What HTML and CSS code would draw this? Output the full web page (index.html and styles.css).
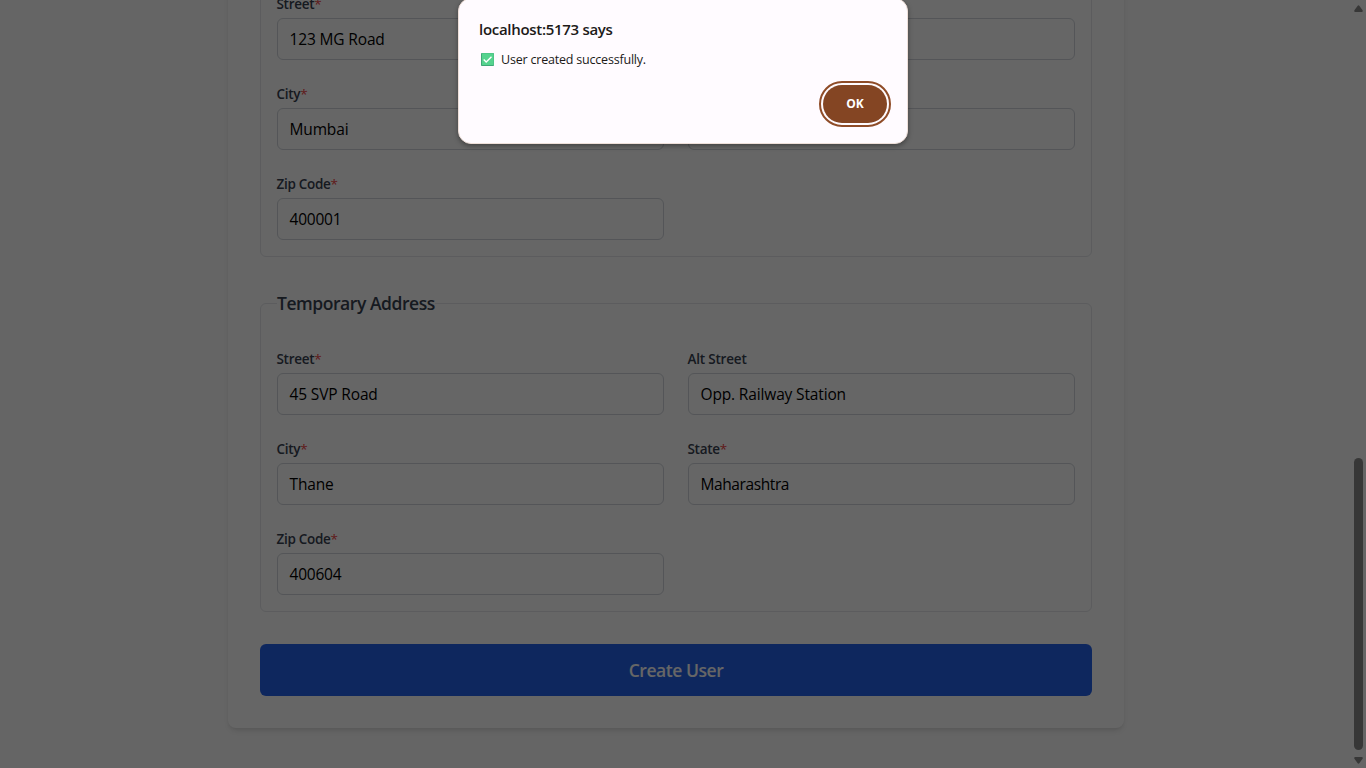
FILE: index.html
```html
<!DOCTYPE html>
<html lang="en">
<head>
<meta charset="utf-8">
<title>Create User</title>
<link rel="stylesheet" href="styles.css">
</head>
<body>
<div class="window">
  <main class="page">
    <form class="card">
      <fieldset class="group">
        <div class="fields">
          <div class="field"><label class="label">Street<span class="req">*</span></label><div class="input">123 MG Road</div></div>
          <div class="field"><label class="label"></label><div class="input"></div></div>
          <div class="field"><label class="label">City<span class="req">*</span></label><div class="input">Mumbai</div></div>
          <div class="field"><label class="label"></label><div class="input"></div></div>
          <div class="field"><label class="label">Zip Code<span class="req">*</span></label><div class="input digits">400001</div></div>
        </div>
      </fieldset>
      <fieldset class="group">
        <legend class="legend">Temporary Address</legend>
        <div class="fields">
          <div class="field"><label class="label">Street<span class="req">*</span></label><div class="input">45 SVP Road</div></div>
          <div class="field"><label class="label alt">Alt Street</label><div class="input">Opp. Railway Station</div></div>
          <div class="field"><label class="label">City<span class="req">*</span></label><div class="input">Thane</div></div>
          <div class="field"><label class="label">State<span class="req">*</span></label><div class="input tight">Maharashtra</div></div>
          <div class="field"><label class="label">Zip Code<span class="req">*</span></label><div class="input digits">400604</div></div>
        </div>
      </fieldset>
      <button class="submit" type="button">Create User</button>
    </form>
  </main>
  <div class="scrollbar">
    <svg class="arrow" width="9" height="7" viewBox="0 0 9 7"><path d="M4.5 0.2 Q5 0.2 5.5 1 L8.6 5.2 Q9.2 7 7.8 7 H1.2 Q-0.2 7 0.4 5.2 L3.5 1 Q4 0.2 4.5 0.2Z"/></svg>
    <div class="thumb"></div>
    <svg class="arrow" width="9" height="7" viewBox="0 0 9 7"><path d="M4.5 6.8 Q5 6.8 5.5 6 L8.6 1.8 Q9.2 0 7.8 0 H1.2 Q-0.2 0 0.4 1.8 L3.5 6 Q4 6.8 4.5 6.8Z"/></svg>
  </div>
</div>
<div class="overlay">
  <div class="dialog">
    <div class="dialog-title">localhost:5173 says</div>
    <div class="dialog-message">
      <svg class="check" width="13" height="13" viewBox="0 0 13 13"><rect width="13" height="13" rx="0.8" fill="#3fa777"/><rect x="1" y="0.3" width="11.7" height="11.7" rx="0.5" fill="#55d38e"/><path d="M2.7 6.6 L5.2 9 L10.5 3.8" fill="none" stroke="#fff" stroke-width="1.4"/></svg>
      <span>User created successfully.</span>
    </div>
    <button class="ok" type="button">OK</button>
  </div>
</div>
</body>
</html>
```
FILE: styles.css
```css
* { box-sizing: border-box; }

body {
  margin: 0;
  font-family: "Open Sans", "Noto Sans", sans-serif;
  overflow: hidden;
}

.window {
  display: flex;
  width: 1366px;
  height: 768px;
  overflow: hidden;
}

.page {
  flex: 1;
  display: flex;
  flex-direction: column;
  justify-content: flex-end;
  align-items: center;
  padding: 0 0 40px 1px;
  background: #fdfdfd;
  overflow: hidden;
}

.card {
  flex: none;
  display: flex;
  flex-direction: column;
  gap: 32px;
  width: 896px;
  padding: 32px;
  background: #fff;
  border-radius: 8px;
  box-shadow: 0 4px 6px -1px rgba(0, 0, 0, .1), 0 2px 4px -2px rgba(0, 0, 0, .1);
}

.group {
  margin: 0;
  padding: 16px;
  border: 1px solid #e5e7eb;
  border-radius: 6px;
}

.legend {
  padding: 0;
  margin-bottom: 16px;
  font-size: 17.5px;
  font-weight: 600;
  line-height: 28px;
  letter-spacing: -0.45px;
  color: #374151;
}

.fields {
  display: grid;
  grid-template-columns: 1fr 1fr;
  gap: 24px;
}

.field {
  display: flex;
  flex-direction: column;
  gap: 4px;
}

.label {
  height: 20px;
  margin-left: -0.5px;
  font-size: 13.5px;
  font-weight: 600;
  line-height: 20px;
  letter-spacing: -0.3px;
  color: #374151;
}

.label.alt { letter-spacing: -0.2px; }

.req { color: #ef4444; font-weight: 400; }

.input {
  height: 42px;
  padding: 0 11.5px;
  border: 1px solid #d1d5db;
  border-radius: 6px;
  font-size: 15.5px;
  line-height: 41px;
  letter-spacing: -0.15px;
  color: #000;
}

.input.tight { letter-spacing: -0.4px; }
.input.digits { letter-spacing: -0.22px; }

.submit {
  height: 52px;
  padding: 0;
  border: 0;
  border-radius: 6px;
  background: #2563eb;
  color: #fff;
  font: 600 17.5px/52px "Open Sans", sans-serif;
  letter-spacing: -0.45px;
}

.scrollbar {
  flex: none;
  display: flex;
  flex-direction: column;
  align-items: center;
  width: 15px;
  padding: 5px 0 4px;
  background: #fcfcfc;
}

.arrow { display: block; fill: #8b8b8b; }

.thumb {
  width: 9px;
  height: 292px;
  margin: auto 0 7px;
  border-radius: 5px;
  background: #8b8b8b;
}

.overlay {
  position: absolute;
  inset: 0;
  display: flex;
  justify-content: center;
  align-items: flex-start;
  background: rgba(0, 0, 0, .6);
}

.dialog {
  display: flex;
  flex-direction: column;
  width: 450px;
  height: 146px;
  margin-top: -2px;
  padding: 19px 20px 20px;
  border: 1px solid #eedfd9;
  border-radius: 13px;
  background: #fffbff;
  box-shadow: 0 2px 5px rgba(0, 0, 0, .35);
}

.dialog-title {
  font-size: 15px;
  font-weight: 600;
  line-height: 22px;
  letter-spacing: -0.3px;
  color: #201a18;
}

.dialog-message {
  display: flex;
  align-items: center;
  gap: 7px;
  margin-top: 11px;
  padding-left: 2px;
  font-size: 12.5px;
  line-height: 18px;
  letter-spacing: -0.2px;
  color: #201a18;
}

.check { display: block; margin-top: -2px; }

.ok {
  align-self: flex-end;
  width: 64px;
  height: 38px;
  margin: 16px 0 0;
  padding: 0;
  border: 0;
  border-radius: 19px;
  background: #844523;
  outline: 2px solid #8f4c28;
  outline-offset: 2px;
  color: #fff;
  font: 700 12px/38px "Open Sans", sans-serif;
}
```
